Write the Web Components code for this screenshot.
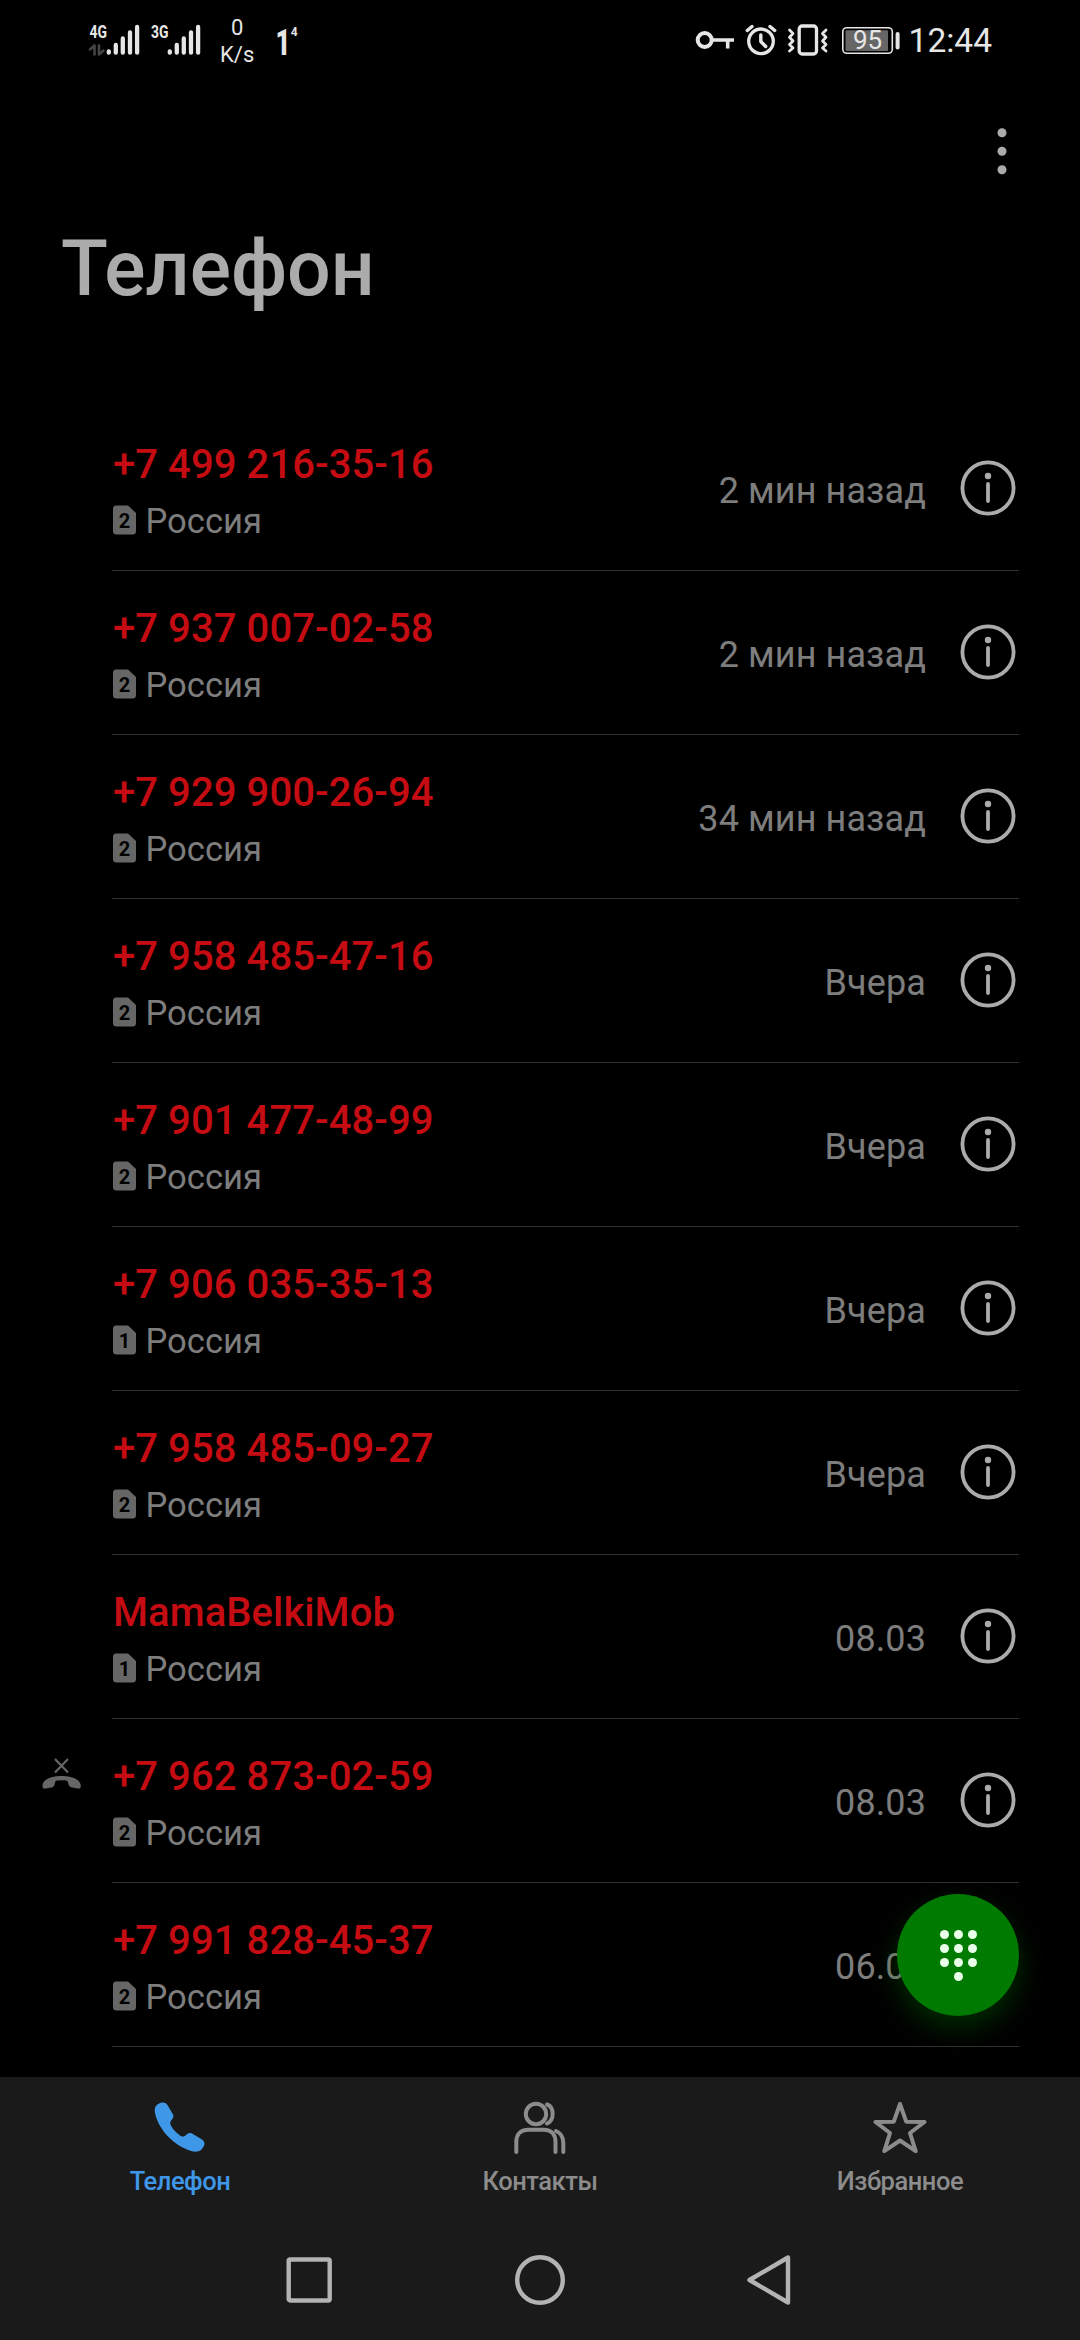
<!DOCTYPE html>
<html lang="ru">
<head>
<meta charset="utf-8">
<title>Телефон</title>
<style>
  html, body {
    margin: 0;
    padding: 0;
    background: #000;
  }
</style>
</head>
<body>
<phone-app>
  <status-bar slot="status"></status-bar>
  <app-header slot="header">Телефон</app-header>
  <call-row sim="2" when="2 мин назад">+7 499 216-35-16</call-row>
  <call-row sim="2" when="2 мин назад">+7 937 007-02-58</call-row>
  <call-row sim="2" when="34 мин назад">+7 929 900-26-94</call-row>
  <call-row sim="2" when="Вчера">+7 958 485-47-16</call-row>
  <call-row sim="2" when="Вчера">+7 901 477-48-99</call-row>
  <call-row sim="1" when="Вчера">+7 906 035-35-13</call-row>
  <call-row sim="2" when="Вчера">+7 958 485-09-27</call-row>
  <call-row sim="1" when="08.03">MamaBelkiMob</call-row>
  <call-row sim="2" when="08.03" rejected>+7 962 873-02-59</call-row>
  <call-row sim="2" when="06.03">+7 991 828-45-37</call-row>
  <dial-button slot="fab"></dial-button>
  <tab-item slot="tabs" icon="phone" active>Телефон</tab-item>
  <tab-item slot="tabs" icon="contacts">Контакты</tab-item>
  <tab-item slot="tabs" icon="star">Избранное</tab-item>
  <system-nav slot="nav"></system-nav>
</phone-app>

<script>
/**
 * Creates a template element from markup.
 *
 * @param {string} html - the markup.
 * @returns {HTMLTemplateElement} the template.
 */
function createTemplate (html) {
  const template = document.createElement('template')
  template.innerHTML = html
  return template
}

/**
 * Base class that attaches the shadow root.
 */
class BaseElement extends HTMLElement {
  /**
   * Creates an instance of the current type.
   */
  constructor () {
    super()
    this.attachShadow({ mode: 'open' })
      .appendChild(this.constructor.template.content.cloneNode(true))
  }
}

/**
 * The whole screen.
 */
customElements.define('phone-app', class extends BaseElement {
  static template = createTemplate(`
    <style>
      :host {
        display: flex;
        flex-direction: column;
        position: relative;
        width: 1080px;
        height: 2340px;
        overflow: hidden;
        background: #000;
        color: #ababab;
        font-family: Roboto, "Noto Sans", sans-serif;
      }
      main {
        flex: 1;
        min-height: 0;
      }
      nav {
        display: flex;
        height: 143px;
        background: #1a1a1a;
      }
      ::slotted(dial-button) {
        position: absolute;
        left: 897px;
        top: 1894px;
      }
    </style>
    <slot name="status"></slot>
    <slot name="header"></slot>
    <main><slot></slot></main>
    <nav><slot name="tabs"></slot></nav>
    <slot name="nav"></slot>
    <slot name="fab"></slot>
  `)
})

/**
 * Signal, network speed, alarm, battery and clock.
 */
customElements.define('status-bar', class extends BaseElement {
  static template = createTemplate(`
    <style>
      :host {
        display: flex;
        justify-content: space-between;
        box-sizing: border-box;
        height: 80px;
        padding: 0 88px;
        color: #e6e6e6;
      }
      div {
        display: flex;
      }
      svg {
        display: block;
        height: 80px;
        fill: none;
        stroke: #e6e6e6;
        stroke-linecap: round;
        stroke-linejoin: round;
      }
      text {
        fill: #e6e6e6;
        stroke: none;
      }
      .speed {
        width: 40px;
        margin: 15px -3px 0 16px;
        font-size: 22px;
        line-height: 26.5px;
        text-align: center;
      }
      .clock {
        font-size: 33.5px;
        line-height: 82px;
        margin-left: 5px;
      }
    </style>
    <div>
      <svg width="61" viewBox="88 0 61 80">
        <text x="89.5" y="37.7" font-size="18" font-weight="700" textLength="17.5" lengthAdjust="spacingAndGlyphs">4G</text>
        <path d="M90 49.5L94.5 45.5V54.5M99 45.5V54.5L103.5 50.5" stroke="#444" stroke-width="2.6"/>
        <path d="M108.8 51.3V52.7M115.8 45V52.7M122.8 38.5V52.7M130 32.5V52.7M137.1 27V52.7" stroke-width="4.3"/>
      </svg>
      <svg width="55" viewBox="149 0 55 80">
        <text x="151" y="37.7" font-size="18" font-weight="700" textLength="17.5" lengthAdjust="spacingAndGlyphs">3G</text>
        <path d="M169.8 51.3V52.7M176.8 45V52.7M183.8 38.5V52.7M191 32.5V52.7M198.1 27V52.7" stroke-width="4.3"/>
      </svg>
      <div class="speed">0<br>K/s</div>
      <svg width="50" viewBox="257 0 50 80">
        <text x="275.6" y="55" font-size="37.5" font-weight="900" textLength="15" lengthAdjust="spacingAndGlyphs">1</text>
        <text x="290.7" y="35.8" font-size="12" font-weight="700">4</text>
      </svg>
    </div>
    <div>
      <svg width="44" viewBox="692 0 44 80">
        <circle cx="702.7" cy="40" r="7" stroke-width="4"/>
        <path d="M710 40H732M725.7 40V48.5" stroke-width="3.6" stroke-linecap="butt"/>
      </svg>
      <svg width="46" viewBox="736 0 46 80">
        <circle cx="759" cy="41.3" r="12.3" stroke-width="3.3"/>
        <path d="M758.8 35V41.5L763.7 46.5M745.3 30.5L750 26.5M772.7 30.5L768 26.5" stroke-width="3.4"/>
      </svg>
      <svg width="54" viewBox="782 0 54 80">
        <rect x="797.2" y="26" width="17.3" height="28" rx="3" stroke-width="3.3"/>
        <path d="M787.5 30L791 33.5L787.5 37.2L791 41L787.5 44.5L791 48L787.5 51M824 30L820.5 33.5L824 37.2L820.5 41L824 44.5L820.5 48L824 51" stroke-width="2.8"/>
      </svg>
      <svg width="66" viewBox="836 0 66 80">
        <rect x="840.8" y="27.7" width="49.5" height="25.6" rx="4" stroke-width="1.6"/>
        <rect x="843.5" y="30.3" width="42.5" height="20.7" rx="1" fill="#666" stroke="none"/>
        <path d="M895.6 34V47.5" stroke-width="4"/>
        <text x="851" y="49.3" font-size="26">95</text>
      </svg>
      <span class="clock">12:44</span>
    </div>
  `)
})

/**
 * Title and overflow menu.
 */
customElements.define('app-header', class extends BaseElement {
  static template = createTemplate(`
    <style>
      :host {
        display: flex;
        flex-direction: column;
        box-sizing: border-box;
        height: 327px;
        padding: 40px 62px 0 61px;
      }
      svg {
        align-self: flex-end;
        fill: #ababab;
      }
      h1 {
        margin: 42px 0 0;
        font-size: 77px;
        font-weight: 500;
        line-height: 90px;
      }
    </style>
    <svg width="32" height="62" viewBox="0 0 32 62">
      <circle cx="16" cy="12.7" r="4.5"/>
      <circle cx="16" cy="31.2" r="4.5"/>
      <circle cx="16" cy="49.7" r="4.5"/>
    </svg>
    <h1><slot></slot></h1>
  `)
})

/**
 * One entry of the call log.
 */
customElements.define('call-row', class extends BaseElement {
  static template = createTemplate(`
    <style>
      :host {
        display: flex;
        height: 164px;
        padding-right: 61px;
      }
      .state {
        width: 112px;
      }
      .state svg {
        display: none;
        margin: 38px 0 0 41px;
      }
      :host([rejected]) .state svg {
        display: block;
      }
      .body {
        flex: 1;
        display: flex;
        box-sizing: border-box;
        border-bottom: 1px solid #303030;
      }
      .who {
        flex: 1;
        padding-top: 34px;
      }
      .number {
        font-size: 40px;
        font-weight: 500;
        line-height: 48px;
        letter-spacing: .08px;
        color: #c40c12;
        padding-left: 1px;
        white-space: nowrap;
      }
      .place {
        display: flex;
        gap: 8.5px;
        margin-top: 11px;
        font-size: 34.6px;
        line-height: 43px;
        color: #7d7d7d;
      }
      .place svg {
        margin-top: 5px;
      }
      time {
        padding-top: 63px;
        font-size: 36px;
        line-height: 42px;
        letter-spacing: .1px;
        color: #7d7d7d;
      }
      .info {
        margin: 53px 3px 0 34px;
      }
    </style>
    <div class="state">
      <svg width="41" height="34" viewBox="0 0 41 34">
        <path d="M14 2L27 15.5M27 2L14 15.5" stroke="#666" stroke-width="2.2" fill="none"/>
        <path d="M1.5 29C1.5 22 11 19 20.5 19S39.8 22 39.8 29C39.8 31.5 38.5 32 36.5 31.6L30 30.3C27 29.5 27.8 25 26 23.8C24 23 17 23 15 23.8C13.5 25 14 29.5 11.5 30.3L5 31.6C2.5 32 1.5 31.5 1.5 29Z" fill="#666"/>
      </svg>
    </div>
    <div class="body">
      <div class="who">
        <div class="number"><slot></slot></div>
        <div class="place">
          <svg width="25" height="31" viewBox="0 0 25 31">
            <path d="M4 .5H16L24 8V26Q24 29.5 20.5 29.5H4.5Q1 29.5 1 26V4Q1 .5 4 .5Z" fill="#666"/>
            <text x="12.5" y="23" text-anchor="middle" font-size="20" font-weight="700" fill="#000"></text>
          </svg>
          <span>Россия</span>
        </div>
      </div>
      <time></time>
      <svg class="info" width="56" height="56" viewBox="0 0 56 56">
        <circle cx="28" cy="28" r="25.6" fill="none" stroke="#ababab" stroke-width="3.8"/>
        <circle cx="28" cy="16" r="3.2" fill="#ababab"/>
        <path d="M28 24V41" stroke="#ababab" stroke-width="3.8" stroke-linecap="round"/>
      </svg>
    </div>
  `)

  /**
   * Called after the element is inserted into the DOM.
   */
  connectedCallback () {
    this.shadowRoot.querySelector('text').textContent = this.getAttribute('sim')
    this.shadowRoot.querySelector('time').textContent = this.getAttribute('when')
  }
})

/**
 * Floating button that opens the keypad.
 */
customElements.define('dial-button', class extends BaseElement {
  static template = createTemplate(`
    <style>
      :host {
        display: grid;
        place-items: center;
        width: 122px;
        height: 122px;
        border-radius: 50%;
        background: #007a00;
        box-shadow: 0 12px 28px rgba(0, 122, 0, .36);
      }
      .keys {
        display: grid;
        grid-template-columns: repeat(3, 9px);
        gap: 5px;
      }
      i {
        width: 9px;
        height: 9px;
        border-radius: 50%;
        background: #e9ffe9;
      }
      i:last-child {
        grid-column: 2;
      }
    </style>
    <div class="keys"><i></i><i></i><i></i><i></i><i></i><i></i><i></i><i></i><i></i><i></i></div>
  `)
})

const tabIcons = {
  phone: '<path fill="currentColor" stroke="none" d="M3 5C6 1 12 0 14.5 4L20 13.5C22 18 16 19 17.5 23.5C20 29 25 33.5 29 35.5C33 36.5 34 30.5 39 32.5L49 38.5C53.5 41.5 51 46 48 49C44 52 38.5 50.5 34 48.5C17 41.5 5 26 2 12C1.5 9 1.500 7 3 5Z"/>',
  contacts: '<circle cx="23" cy="13" r="10.2"/><path d="M34 3.5C41.5 6 41.5 19.5 34 22.5M3.3 51V41C3.3 33 8 28.700 15 28.7H31C38 28.7 42.5 33 42.5 41V51M43 30C48 32 50.3 36 50.3 42V51"/>',
  star: '<path d="M27 3L33.2 20.7L51.5 21L37 32L42.7 50.2L27 39.5L11.3 50.2L17 32L2.500 21L20.8 20.7Z"/>'
}

/**
 * A tab of the bottom bar.
 */
customElements.define('tab-item', class extends BaseElement {
  static template = createTemplate(`
    <style>
      :host {
        flex: 1;
        display: flex;
        flex-direction: column;
        align-items: center;
        padding-top: 24px;
        color: #8c8c8c;
        font-size: 25.5px;
        font-weight: 500;
        line-height: 30px;
        letter-spacing: -.45px;
      }
      :host([active]) {
        color: #3f97e8;
      }
      svg {
        margin-bottom: 11px;
        fill: none;
        stroke: currentColor;
        stroke-width: 4;
        stroke-linecap: round;
        stroke-linejoin: round;
      }
    </style>
    <svg width="54" height="54" viewBox="0 0 54 54"></svg>
    <slot></slot>
  `)

  /**
   * Called after the element is inserted into the DOM.
   */
  connectedCallback () {
    this.shadowRoot.querySelector('svg').innerHTML = tabIcons[this.getAttribute('icon')]
  }
})

/**
 * Android navigation buttons.
 */
customElements.define('system-nav', class extends BaseElement {
  static template = createTemplate(`
    <style>
      :host {
        display: flex;
        justify-content: center;
        gap: 176px;
        height: 120px;
        background: #1a1a1a;
      }
      svg {
        fill: none;
        stroke: #b3b3b3;
        stroke-width: 4.4;
        stroke-linejoin: round;
      }
    </style>
    <svg width="54" height="120" viewBox="0 0 54 120"><rect x="5.7" y="39.5" width="41" height="41" rx="1.5"/></svg>
    <svg width="54" height="120" viewBox="0 0 54 120"><circle cx="27" cy="60" r="22.8"/></svg>
    <svg width="54" height="120" viewBox="0 0 54 120"><path d="M6.500 60L45 37.5V82.5Z"/></svg>
  `)
})
</script>
</body>
</html>
